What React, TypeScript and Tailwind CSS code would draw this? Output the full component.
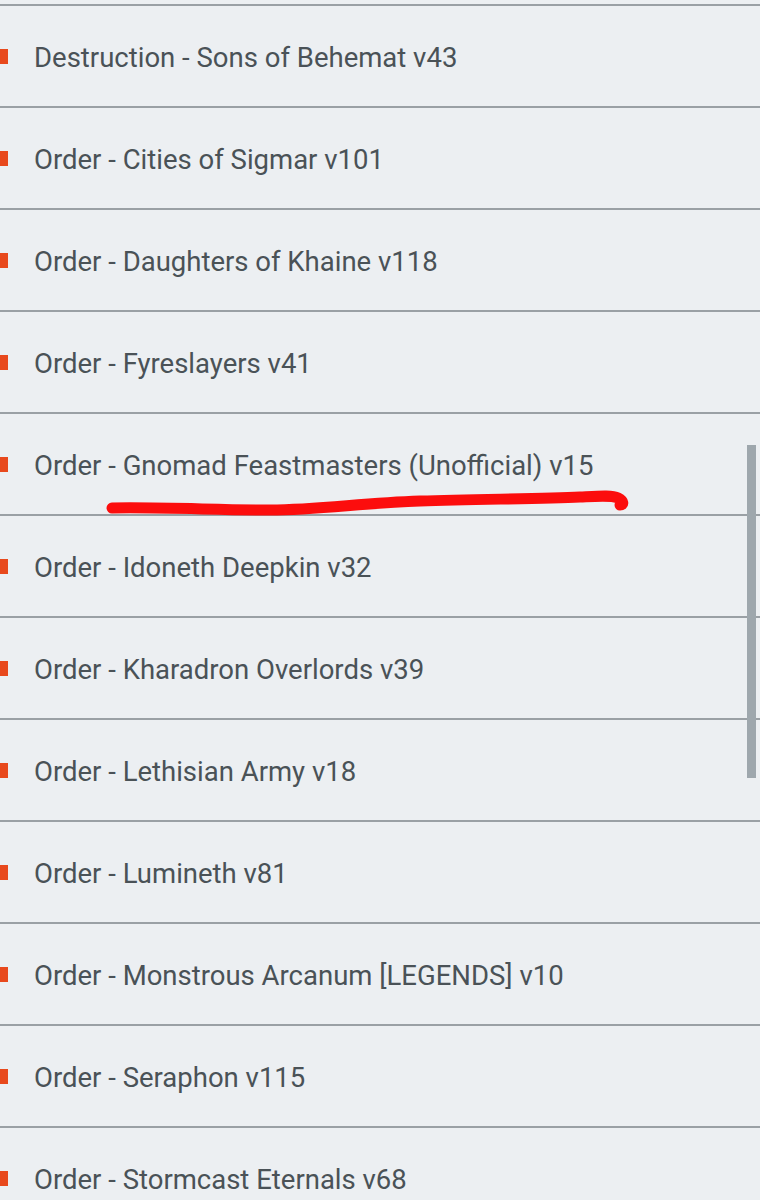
import React from 'react';

const armies = [
    'Destruction - Sons of Behemat v43',
    'Order - Cities of Sigmar v101',
    'Order - Daughters of Khaine v118',
    'Order - Fyreslayers v41',
    'Order - Gnomad Feastmasters (Unofficial) v15',
    'Order - Idoneth Deepkin v32',
    'Order - Kharadron Overlords v39',
    'Order - Lethisian Army v18',
    'Order - Lumineth v81',
    'Order - Monstrous Arcanum [LEGENDS] v10',
    'Order - Seraphon v115',
    'Order - Stormcast Eternals v68',
];

const ArmyRow: React.FC<{ name: string }> = ({ name }) => (
    <div className="h-[102px] border-b-2 border-[#9aa0a5] flex items-center">
        <span className="w-[8px] h-[15px] bg-[#e8491d] shrink-0" />
        <span className="ml-[26px] pt-[3px] text-[27.5px] text-[#4a5257] leading-none">{name}</span>
    </div>
);

const App: React.FC = () => {
    return (
        <div className="relative w-[760px] h-[1200px] overflow-hidden bg-[#eceff2]" style={{ fontFamily: 'Roboto, "Noto Sans", sans-serif' }}>
            <div className="h-[6px] border-b-2 border-[#9aa0a5]" />
            {armies.map(a => <ArmyRow key={a} name={a} />)}

            {/* scroll thumb */}
            <div className="absolute left-[747px] top-[445px] w-[9px] h-[333px] bg-[#9ea7ad]" />

            {/* red marker underline */}
            <svg className="absolute left-0 top-0 pointer-events-none" width="760" height="1200">
                <path
                    d="M112 508 C 160 507, 220 510, 270 510 C 320 510, 360 503, 420 501 C 480 499, 540 499, 580 497 C 600 496, 612 495, 618 498 C 624 501, 624 505, 620 505"
                    fill="none"
                    stroke="#fc0d0d"
                    strokeWidth="11"
                    strokeLinecap="round"
                    strokeLinejoin="round"
                />
            </svg>
        </div>
    );
};

export default App;
